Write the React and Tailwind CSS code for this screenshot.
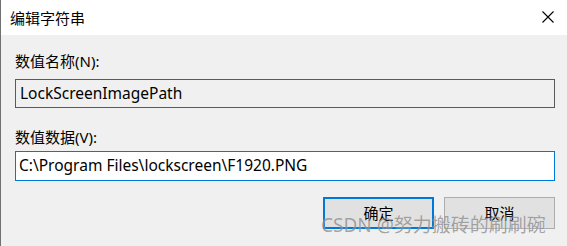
export default function App() {
  const font = { fontFamily: '"Noto Sans", "Noto Sans CJK SC", sans-serif' };
  return (
    <div className="relative w-[567px] h-[246px] bg-[#f0f0f0] border-l border-[#707070] overflow-hidden text-black" style={font}>
      <div className="h-[35px] bg-white flex items-center justify-between pl-[9px] pr-[13px]">
        <span className="text-[15px] leading-[20px]">编辑字符串</span>
        <svg width="12" height="12" viewBox="0 0 12 12" className="mt-[-1px]">
          <path d="M0.5 0.5 L11.5 11.5 M11.5 0.5 L0.5 11.5" stroke="#000" strokeWidth="1.1" />
        </svg>
      </div>
      <div className="pl-[14px] pr-[12px] flex flex-col">
        <div className="mt-[16px] text-[15px] leading-[20px]">数值名称(N):</div>
        <div className="mt-[8px] h-[29px] border border-[#5a5a5a] bg-[#f0f0f0] flex items-center pl-[4px] text-[15.5px]">
          LockScreenImagePath
        </div>
        <div className="mt-[19px] text-[15px] leading-[20px]">数值数据(V):</div>
        <div className="mt-[4px] h-[30px] border border-[#0078d7] bg-white flex items-center pl-[3px] text-[15.5px]">
          C:\Program Files\lockscreen\F1920.PNG
        </div>
        <div className="mt-[16px] flex justify-end gap-[10px]">
          <button className="w-[111px] h-[32px] border-2 border-[#0078d7] bg-[#e1e1e1] text-[15px] flex items-center justify-center">确定</button>
          <button className="w-[111px] h-[32px] border border-[#adadad] bg-[#e1e1e1] text-[15px] flex items-center justify-center">取消</button>
        </div>
      </div>
      <div
        className="absolute left-[320px] top-[212px] text-[19px] leading-[26px] text-[rgba(90,90,90,0.55)] whitespace-nowrap"
        style={{ ...font, textShadow: '0 0 1px rgba(255,255,255,0.6)' }}
      >
        CSDN @努力搬砖的刷刷碗
      </div>
    </div>
  );
}
